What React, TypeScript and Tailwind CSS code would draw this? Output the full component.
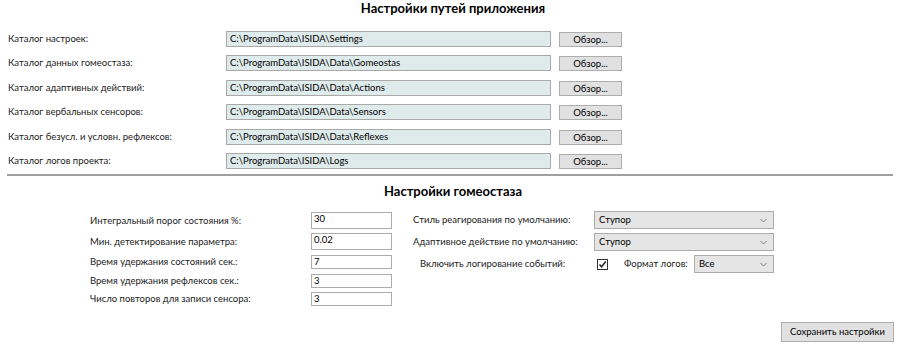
import React from "react";

const PATHS = [
  { label: "Каталог настроек:", value: "C:\\ProgramData\\ISIDA\\Settings" },
  { label: "Каталог данных гомеостаза:", value: "C:\\ProgramData\\ISIDA\\Data\\Gomeostas" },
  { label: "Каталог адаптивных действий:", value: "C:\\ProgramData\\ISIDA\\Data\\Actions" },
  { label: "Каталог вербальных сенсоров:", value: "C:\\ProgramData\\ISIDA\\Data\\Sensors" },
  { label: "Каталог безусл. и условн. рефлексов:", value: "C:\\ProgramData\\ISIDA\\Data\\Reflexes" },
  { label: "Каталог логов проекта:", value: "C:\\ProgramData\\ISIDA\\Logs" },
];

const PARAMS = [
  { label: "Интегральный порог состояния %:", value: "30", h: "h-[17px]", mt: "mt-0" },
  { label: "Мин. детектирование параметра:", value: "0.02", h: "h-[17px]", mt: "mt-[4px]" },
  { label: "Время удержания состояний сек.:", value: "7", h: "h-[14px]", mt: "mt-[5px]" },
  { label: "Время удержания рефлексов сек.:", value: "3", h: "h-[14px]", mt: "mt-[5px]" },
  { label: "Число повторов для записи сенсора:", value: "3", h: "h-[14px]", mt: "mt-[4px]" },
];

function Chevron() {
  return (
    <svg width="7" height="5" viewBox="0 0 7 5" className="shrink-0">
      <path d="M0.5 1 L3.5 4 L6.5 1" fill="none" stroke="#7a7a7a" strokeWidth="1" />
    </svg>
  );
}

function Combo({ value, w }: { value: string; w: string }) {
  return (
    <div className={`${w} h-[18px] flex items-center justify-between pl-[4px] pr-[6px] bg-[#e5e5e5] border border-[#acacac] text-black`}>
      <span>{value}</span>
      <Chevron />
    </div>
  );
}

export default function App() {
  return (
    <div
      className="w-[900px] h-[345px] bg-white text-[9.5px] text-[#1b1b1b] overflow-hidden relative whitespace-nowrap"
      style={{ fontFamily: 'Lato, "Liberation Sans", sans-serif' }}
    >
      {/* Paths section */}
      <div className="h-[17px] flex justify-center">
        <h1 className="text-[13px] font-bold leading-[17px] text-black pl-[6px]">Настройки путей приложения</h1>
      </div>

      <div className="pt-[14px] pl-[8px]">
        {PATHS.map((p) => (
          <div key={p.label} className="h-[24.4px] flex items-start">
            <div className="w-[218px] leading-[16px]">{p.label}</div>
            <div className="w-[325px] h-[16px] bg-[#dfeaea] border border-[#a9a9a9] pl-[3px] leading-[14px] text-black">
              {p.value}
            </div>
            <button className="ml-[8px] mt-[1px] w-[63px] h-[15px] bg-[#e1e1e1] border border-[#adadad] leading-[13px] text-black text-[9.5px]">
              Обзор...
            </button>
          </div>
        ))}
      </div>

      <div className="mx-[7px] mt-[-3px] h-[2px] bg-[#a0a0a0]" />

      {/* Homeostasis section */}
      <div className="mt-[6px] h-[19px] flex justify-center">
        <h2 className="text-[13px] font-bold leading-[19px] text-black pl-[6px]">Настройки гомеостаза</h2>
      </div>

      <div className="flex mt-[11px]">
        <div className="pl-[90px] w-[413px]">
          {PARAMS.map((p) => (
            <div key={p.label} className={`flex items-center ${p.mt}`}>
              <div className="w-[221px] leading-[14px]">{p.label}</div>
              <div className={`w-[81px] ${p.h} bg-white border border-[#acacac] pl-[2px] leading-[12px] text-black`}>
                {p.value}
              </div>
            </div>
          ))}
        </div>

        <div className="mt-[-1px]">
          <div className="flex items-center">
            <div className="w-[181px]">Стиль реагирования по умолчанию:</div>
            <Combo value="Ступор" w="w-[180px]" />
          </div>
          <div className="flex items-center mt-[4px]">
            <div className="w-[181px]">Адаптивное действие по умолчанию:</div>
            <Combo value="Ступор" w="w-[180px]" />
          </div>
          <div className="flex items-center mt-[4px]">
            <div className="w-[184px] pl-[7px]">Включить логирование событий:</div>
            <div className="w-[11px] h-[11px] border border-[#333] bg-white flex items-center justify-center">
              <svg width="9" height="9" viewBox="0 0 9 9">
                <path d="M1.5 4.5 L3.5 6.8 L7.8 1.5" fill="none" stroke="#222" strokeWidth="1.4" />
              </svg>
            </div>
            <div className="ml-[16px] w-[70px]">Формат логов:</div>
            <Combo value="Все" w="w-[80px]" />
          </div>
        </div>
      </div>

      <div className="absolute right-[6px] bottom-[3px]">
        <button className="w-[113px] h-[20px] bg-[#e1e1e1] border border-[#adadad] text-black text-[9.5px] leading-[18px]">
          Сохранить настройки
        </button>
      </div>
    </div>
  );
}
